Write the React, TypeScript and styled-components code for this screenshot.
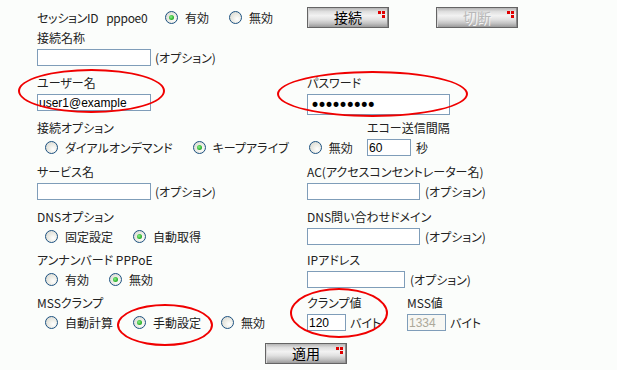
import React from 'react'
import styled, { createGlobalStyle } from 'styled-components'

const GlobalStyle = createGlobalStyle`
  html, body {
    margin: 0;
    padding: 0;
    background: #fbfdfb;
  }
  body {
    font-family: "Noto Sans CJK JP", "Noto Sans", sans-serif;
    font-size: 12px;
    color: #222;
    font-feature-settings: "palt";
  }
`;

function Marks() {
    return (
        <MarkBox width="7" height="7" viewBox="0 0 7 7">
            <rect x="0" y="0" width="3" height="3" fill="#e00000" />
            <rect x="4" y="0" width="3" height="3" fill="#e00000" />
            <rect x="4" y="4" width="3" height="3" fill="#e00000" />
        </MarkBox>
    )
}

function Choice({ label, checked, name }: { label: string; checked?: boolean; name: string }) {
    return (
        <Option>
            <Radio name={name} defaultChecked={checked} />
            <span>{label}</span>
        </Option>
    )
}

function App() {
    return (
        <Page>
            <GlobalStyle />
            <TopRow>
                <SessionInfo>
                    <SessionName>
                        <span>セッションID</span>
                        <span>pppoe0</span>
                    </SessionName>
                    <RadioGroup $indent={0}>
                        <Choice name="session" label="有効" checked />
                        <Choice name="session" label="無効" />
                    </RadioGroup>
                </SessionInfo>
                <Buttons>
                    <ImgButton>接続<Marks /></ImgButton>
                    <ImgButton disabled>切断<Marks /></ImgButton>
                </Buttons>
            </TopRow>

            <Row $h={45}>
                <Field>
                    <Label>接続名称</Label>
                    <Control>
                        <TextBox $w={114} />
                        <Note $gap={4}>(オプション)</Note>
                    </Control>
                </Field>
            </Row>

            <Row $h={45}>
                <Field>
                    <Ring $l={-19} $t={-7} $w={147} $h={44} />
                    <Label>ユーザー名</Label>
                    <Control>
                        <TextBox $w={114} defaultValue="user1@example" />
                    </Control>
                </Field>
                <Field>
                    <Ring $l={-30} $t={-5} $w={191} $h={46} />
                    <Label>パスワード</Label>
                    <Control>
                        <PassBox type="password" defaultValue="password1" />
                    </Control>
                </Field>
            </Row>

            <Row $h={44} $split={330}>
                <Field>
                    <Label>接続オプション</Label>
                    <RadioGroup $indent={8}>
                        <Choice name="opt" label="ダイアルオンデマンド" />
                        <Choice name="opt" label="キープアライブ" checked />
                        <Choice name="opt" label="無効" />
                    </RadioGroup>
                </Field>
                <Field>
                    <Label>エコー送信間隔</Label>
                    <Control>
                        <TextBox $w={44} defaultValue="60" />
                        <Note $gap={5}>秒</Note>
                    </Control>
                </Field>
            </Row>

            <Row $h={45}>
                <Field>
                    <Label>サービス名</Label>
                    <Control>
                        <TextBox $w={114} />
                        <Note $gap={4}>(オプション)</Note>
                    </Control>
                </Field>
                <Field>
                    <Label>AC(アクセスコンセントレーター名)</Label>
                    <Control>
                        <TextBox $w={113} />
                        <Note $gap={5}>(オプション)</Note>
                    </Control>
                </Field>
            </Row>

            <Row $h={43}>
                <Field>
                    <Label>DNSオプション</Label>
                    <RadioGroup $indent={8}>
                        <Choice name="dns" label="固定設定" />
                        <Choice name="dns" label="自動取得" checked />
                    </RadioGroup>
                </Field>
                <Field>
                    <Label>DNS問い合わせドメイン</Label>
                    <Control>
                        <TextBox $w={113} />
                        <Note $gap={5}>(オプション)</Note>
                    </Control>
                </Field>
            </Row>

            <Row $h={43}>
                <Field>
                    <Label>アンナンバード PPPoE</Label>
                    <RadioGroup $indent={8}>
                        <Choice name="unnum" label="有効" />
                        <Choice name="unnum" label="無効" checked />
                    </RadioGroup>
                </Field>
                <Field>
                    <Label>IPアドレス</Label>
                    <Control>
                        <TextBox $w={98} />
                        <Note $gap={5}>(オプション)</Note>
                    </Control>
                </Field>
            </Row>

            <Row $h={47}>
                <Field>
                    <Label>MSSクランプ</Label>
                    <RadioGroup $indent={8}>
                        <Choice name="mss" label="自動計算" />
                        <Option>
                            <Ring $l={-16} $t={-10} $w={96} $h={42} />
                            <Radio name="mss" defaultChecked />
                            <span>手動設定</span>
                        </Option>
                        <Choice name="mss" label="無効" />
                    </RadioGroup>
                </Field>
                <ByteGroup>
                    <Field>
                        <Ring $l={-17} $t={-8} $w={98} $h={50} />
                        <Label>クランプ値</Label>
                        <Control>
                            <TextBox $w={39} defaultValue="120" />
                            <Note $gap={4}>バイト</Note>
                        </Control>
                    </Field>
                    <Field>
                        <Label>MSS値</Label>
                        <Control>
                            <TextBox $w={39} defaultValue="1334" disabled />
                            <Note $gap={4}>バイト</Note>
                        </Control>
                    </Field>
                </ByteGroup>
            </Row>

            <ApplyRow>
                <ImgButton>適用<Marks /></ImgButton>
            </ApplyRow>
        </Page>
    )
}

const Page = styled.div`
    width: 538px;
    padding: 7px 0 0 37px;
`;
const TopRow = styled.div`
    display: grid;
    grid-template-columns: 270px 1fr;
    align-items: center;
    height: 21px;
    margin-bottom: 3px;
`;
const SessionInfo = styled.div`
    display: grid;
    grid-template-columns: 128px auto;
    align-items: center;
    white-space: nowrap;
`;
const SessionName = styled.div`
    display: flex;
    gap: 8px;
    letter-spacing: -0.3px;
`;
const Buttons = styled.div`
    display: flex;
    gap: 47px;
`;
const ImgButton = styled.button`
    position: relative;
    width: 82px;
    height: 21px;
    padding: 0;
    border: 1px solid #646464;
    background: linear-gradient(to bottom, #b4b4b4 0%, #dedede 18%, #f2f2f2 40%, #e2e2e2 60%, #c4c4c4 80%, #9a9a9a 100%);
    box-shadow: inset 1px 0 0 #d8d8d8, inset -1px 0 0 #8a8a8a;
    font-family: "Noto Sans CJK JP", sans-serif;
    font-size: 14px;
    line-height: 19px;
    color: #000;
    &:disabled {
        color: #b8b8b8;
        text-shadow: 1px 1px 0 #f4f4f4;
    }
`;
const MarkBox = styled.svg`
    position: absolute;
    top: 3px;
    right: 3px;
`;
const Row = styled.div<{ $h: number; $split?: number }>`
    display: grid;
    grid-template-columns: ${p => p.$split ?? 270}px 1fr;
    align-items: start;
    height: ${p => p.$h}px;
`;
const Field = styled.div`
    position: relative;
    display: flex;
    flex-direction: column;
`;
const Label = styled.div`
    height: 14px;
    line-height: 14px;
    margin-bottom: 4px;
    white-space: nowrap;
`;
const Control = styled.div`
    display: flex;
    align-items: center;
    min-height: 17px;
    white-space: nowrap;
`;
const TextBox = styled.input<{ $w: number }>`
    box-sizing: border-box;
    width: ${p => p.$w}px;
    height: 17px;
    margin: 0;
    padding: 0 1px;
    border: 1px solid #7f9db9;
    background: #fff;
    font-family: "Liberation Sans", sans-serif;
    font-size: 12px;
    color: #000;
    outline: none;
    &:disabled {
        background: #f7f7f3;
        color: #aca899;
    }
`;
const PassBox = styled.input`
    box-sizing: border-box;
    width: 143px;
    height: 21px;
    margin: 0;
    padding: 0 2px;
    border: 1px solid #7f9db9;
    background: #fff;
    font-family: "DejaVu Sans", sans-serif;
    font-size: 17px;
    letter-spacing: -3px;
    color: #000;
    outline: none;
`;
const Note = styled.span<{ $gap: number }>`
    margin-left: ${p => p.$gap}px;
`;
const RadioGroup = styled.div<{ $indent: number }>`
    display: flex;
    align-items: center;
    gap: 20px;
    height: 17px;
    padding-left: ${p => p.$indent}px;
    white-space: nowrap;
`;
const Option = styled.label`
    position: relative;
    display: inline-flex;
    align-items: center;
    gap: 7px;
`;
const Radio = styled.input.attrs({ type: 'radio' })`
    appearance: none;
    position: relative;
    box-sizing: border-box;
    width: 13px;
    height: 13px;
    margin: 0;
    border: 1px solid #1c5180;
    border-radius: 50%;
    background: radial-gradient(circle at 65% 65%, #ffffff 0%, #f0f0ea 35%, #d4d4cc 100%);
    &:checked::after {
        content: '';
        position: absolute;
        left: 3px;
        top: 3px;
        width: 5px;
        height: 5px;
        border-radius: 50%;
        background: radial-gradient(circle at 40% 40%, #8af08a 0%, #2fb42f 60%, #1a8a1a 100%);
    }
`;
const Ring = styled.span<{ $l: number; $t: number; $w: number; $h: number }>`
    position: absolute;
    left: ${p => p.$l}px;
    top: ${p => p.$t}px;
    width: ${p => p.$w}px;
    height: ${p => p.$h}px;
    box-sizing: border-box;
    border: 2px solid #f00000;
    border-radius: 50%;
    pointer-events: none;
`;
const ByteGroup = styled.div`
    display: grid;
    grid-template-columns: 100px auto;
`;
const ApplyRow = styled.div`
    display: flex;
    justify-content: center;
`;

export default App
